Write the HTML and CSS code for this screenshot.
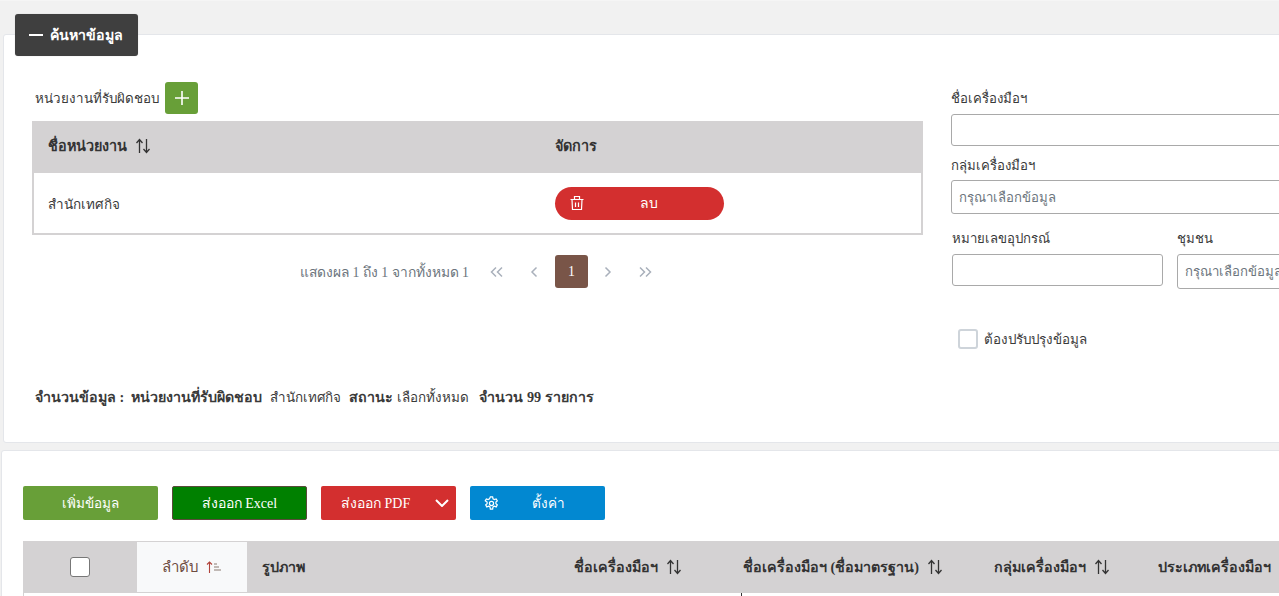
FILE: index.html
```html
<!DOCTYPE html>
<html lang="th">
<head>
<meta charset="utf-8">
<title>ค้นหาข้อมูล</title>
<link rel="stylesheet" href="styles.css">
</head>
<body>
<div class="page">
  <button class="tab"><span class="tab-dash"></span>ค้นหาข้อมูล</button>
  <section class="card search-card">
    <div class="search-grid">
      <div class="left-col">
        <div class="unit-label"><span>หน่วยงานที่รับผิดชอบ</span>
          <button class="add-btn"><svg width="16" height="16" viewBox="0 0 16 16"><path d="M8 1v14M1 8h14" stroke="#fff" stroke-width="1.6" fill="none"/></svg></button>
        </div>
        <table class="unit-table">
          <colgroup><col class="u1"><col></colgroup>
          <thead><tr><th>ชื่อหน่วยงาน <svg class="sort" width="16" height="16" viewBox="0 0 16 16"><path d="M4.500 15V2M1.500 5l3-3.500 3 3.500M11.500 1v13M8.500 11l3 3.500 3-3.500" stroke="#333" stroke-width="1.300" fill="none"/></svg></th><th>จัดการ</th></tr></thead>
          <tbody><tr><td>สำนักเทศกิจ</td><td>
            <button class="del-btn"><svg width="16" height="16" viewBox="0 0 16 16" fill="none" stroke="#fff" stroke-width="1.200"><path d="M1.500 4.500h13M3 4.500l.5 10h9l.5-10M5.500 4.500V1.500h5v3M6.500 7.500v4.500M9.500 7.500v4.500"/></svg><span>ลบ</span></button>
          </td></tr></tbody>
        </table>
        <div class="pager">
          <span class="pager-info">แสดงผล 1 ถึง 1 จากทั้งหมด 1</span>
          <span class="pg"><svg width="14" height="12" viewBox="0 0 14 12" fill="none" stroke="#a9b0bb" stroke-width="1.500"><path d="M6 1.500 1.500 6 6 10.500M12 1.500 7.500 6 12 10.500"/></svg></span>
          <span class="pg"><svg width="8" height="12" viewBox="0 0 8 12" fill="none" stroke="#a9b0bb" stroke-width="1.500"><path d="M6.500 1.500 2 6l4.500 4.500"/></svg></span>
          <span class="pg active">1</span>
          <span class="pg"><svg width="8" height="12" viewBox="0 0 8 12" fill="none" stroke="#a9b0bb" stroke-width="1.500"><path d="M1.500 1.500 6 6l-4.500 4.500"/></svg></span>
          <span class="pg"><svg width="14" height="12" viewBox="0 0 14 12" fill="none" stroke="#a9b0bb" stroke-width="1.500"><path d="M2 1.500 6.500 6 2 10.500M8 1.500 12.500 6 8 10.500"/></svg></span>
        </div>
      </div>
      <div class="right-col">
        <label class="f-label f-first">ชื่อเครื่องมือฯ</label>
        <div class="f-input f-wide"></div>
        <label class="f-label f-second">กลุ่มเครื่องมือฯ</label>
        <div class="f-input f-wide f-select">กรุณาเลือกข้อมูล</div>
        <div class="f-pair">
          <div class="f-num">
            <label class="f-label">หมายเลขอุปกรณ์</label>
            <div class="f-input"></div>
          </div>
          <div class="f-comm">
            <label class="f-label">ชุมชน</label>
            <div class="f-input f-select f-tall">กรุณาเลือกข้อมูล</div>
          </div>
        </div>
        <div class="f-check"><span class="check-box"></span><span class="check-text">ต้องปรับปรุงข้อมูล</span></div>
      </div>
    </div>
    <p class="summary"><b>จำนวนข้อมูล :&nbsp; หน่วยงานที่รับผิดชอบ</b> <span class="sum-reg sum-unit">สำนักเทศกิจ</span>&nbsp; <b class="sum-status">สถานะ</b> <span class="sum-reg">เลือกทั้งหมด</span> &nbsp; <b>จำนวน 99 รายการ</b></p>
  </section>
  <section class="card list-card">
    <div class="actions">
      <button class="act green">เพิ่มข้อมูล</button>
      <button class="act excel">ส่งออก Excel</button>
      <button class="act pdf"><span>ส่งออก PDF</span><svg width="14" height="8" viewBox="0 0 14 8" fill="none" stroke="#fff" stroke-width="2"><path d="M1 1l6 6 6-6"/></svg></button>
      <button class="act setting"><svg width="15" height="15" viewBox="0 0 16 16" fill="none" stroke="#fff" stroke-width="1.300"><path d="M6.800 1h2.400l.4 2 1.500.8 1.900-.7 1.200 2.100-1.500 1.300v1.700l1.500 1.300-1.200 2.100-1.900-.7-1.500.8-.4 2.300H6.800l-.4-2.300-1.500-.8-1.900.7-1.200-2.100 1.500-1.300V6.500L1.300 5.200l1.200-2.100 1.900.7 1.500-.8z"/><circle cx="8" cy="8" r="2.200"/></svg><span>ตั้งค่า</span></button>
    </div>
    <table class="data-table">
      <colgroup><col class="c1"><col class="c2"><col class="c3"><col class="c4"><col class="c5"><col class="c6"><col class="c7"></colgroup>
      <thead>
        <tr>
          <th class="chk"><span class="white-box"></span></th>
          <th class="sorted">ลำดับ <svg class="sort-asc" width="16" height="12" viewBox="0 0 16 12" fill="none" stroke="#b0433a" stroke-width="1.100"><path d="M3.500 12V1M1 3.500 3.500 1 6 3.500" /><path d="M8 3h3M8 6h5M8 9h7" stroke="#8a7a70"/></svg></th>
          <th>รูปภาพ</th>
          <th>ชื่อเครื่องมือฯ <svg class="sort" width="16" height="16" viewBox="0 0 16 16"><path d="M4.500 15V2M1.500 5l3-3.500 3 3.500M11.500 1v13M8.500 11l3 3.500 3-3.500" stroke="#333" stroke-width="1.300" fill="none"/></svg></th>
          <th>ชื่อเครื่องมือฯ (ชื่อมาตรฐาน) <svg class="sort" width="16" height="16" viewBox="0 0 16 16"><path d="M4.500 15V2M1.500 5l3-3.500 3 3.500M11.500 1v13M8.500 11l3 3.500 3-3.500" stroke="#333" stroke-width="1.300" fill="none"/></svg></th>
          <th>กลุ่มเครื่องมือฯ <svg class="sort" width="16" height="16" viewBox="0 0 16 16"><path d="M4.500 15V2M1.500 5l3-3.500 3 3.500M11.500 1v13M8.500 11l3 3.500 3-3.500" stroke="#333" stroke-width="1.300" fill="none"/></svg></th>
          <th>ประเภทเครื่องมือฯ</th>
        </tr>
      </thead>
      <tbody><tr><td></td><td></td><td></td><td></td><td><span class="tick"></span></td><td></td><td></td></tr></tbody>
    </table>
  </section>
</div>
</body>
</html>
```
FILE: styles.css
```css
html, body { margin: 0; padding: 0; }
body {
  width: 1279px;
  height: 596px;
  overflow: hidden;
  background: #f1f1f1;
  font-family: "Liberation Serif", "Noto Sans", sans-serif;
  font-size: 13.2px;
  color: #3a3a3a;
}
button { font-family: inherit; font-size: 14px; border: 0; padding: 0; cursor: pointer; }
.page { width: 1500px; border-top: 1px solid #f5f5f5; }
.card { background: #fff; border: 1px solid #e4e6ea; border-radius: 3px; }
.tab {
  position: relative;
  z-index: 1;
  display: flex;
  align-items: center;
  width: 123px;
  height: 42px;
  margin: 13px 0 -22px 15px;
  padding-left: 14px;
  background: #3f3f3f;
  color: #fff;
  font-size: 14.2px;
  font-weight: 700;
  border-radius: 3px;
  box-shadow: 0 0 1px #bbb;
}
.tab-dash { width: 14px; height: 2px; background: #fff; margin-right: 7px; }
.search-card { margin-left: 3px; height: 407px; padding: 0; position: relative; }
.search-grid { display: flex; align-items: flex-start; padding-top: 47px; padding-left: 28px; }
.left-col { width: 891px; flex: none; }
.unit-label { display: flex; align-items: center; height: 32px; padding-left: 3px; gap: 6px; margin-bottom: 7px; font-size: 13.4px; }
.add-btn { width: 33px; height: 32px; background: #689f38; border-radius: 3px; display: flex; align-items: center; justify-content: center; }
.unit-table { width: 891px; border-collapse: separate; border-spacing: 0; table-layout: fixed; }
.u1 { width: 507px; }
.unit-table th { height: 52px; padding: 0 16px 3px; box-sizing: border-box; background: #d4d2d3; text-align: left; color: #333; font-size: 14.4px; font-weight: 700; }
.unit-table td { height: 62px; padding: 1px 16px 0; box-sizing: border-box; border-bottom: 2px solid #d4d2d3; font-size: 13.5px; }
.unit-table tbody tr td:first-child { border-left: 2px solid #d4d2d3; padding-left: 14px; }
.unit-table tbody tr td:last-child { border-right: 2px solid #d4d2d3; padding-top: 0; }
.sort { vertical-align: -3px; margin-left: 4px; }
.del-btn { display: flex; align-items: center; width: 169px; height: 33px; border-radius: 17px; background: #d32f2f; color: #fff; padding-left: 14px; }
.del-btn span { flex: 1; text-align: center; padding-right: 11px; }
.pager { display: flex; align-items: center; margin-top: 20px; padding-left: 268px; height: 33px; color: #6c757d; font-size: 13.8px; }
.pager-info { margin-right: 10px; }
.pg { width: 37px; height: 33px; display: flex; align-items: center; justify-content: center; }
.pg.active { width: 33px; margin: 0 2px; background: #795548; color: #fff; border-radius: 3px; }
.right-col { width: 600px; flex: none; padding-left: 28px; }
.f-label { display: block; color: #3a3a3a; line-height: 20px; }
.f-first { margin-top: 7px; }
.f-second { margin-top: 10px; margin-bottom: 4px; }
.f-input { height: 32px; box-sizing: border-box; border: 1px solid #a9a9a9; border-radius: 3px; background: #fff; }
.f-first + .f-input { margin-top: 5px; }
.f-select { height: 34px; padding-left: 7px; line-height: 33px; color: #6c757d; }
.f-pair { display: flex; margin-top: 14px; margin-left: 1px; gap: 14px; }
.f-num { width: 211px; flex: none; }
.f-comm { width: 300px; flex: none; }
.f-num .f-label, .f-comm .f-label { margin-top: 1px; margin-bottom: 5px; }
.f-tall { height: 35px; }
.f-check { display: flex; align-items: center; gap: 6px; margin-top: 39px; margin-left: 7px; }
.check-box { border: 2px solid #ced4da; width: 16px; height: 16px; border-radius: 3px; background: #fff; }
.check-text { font-size: 13.4px; padding-top: 1px; }
.summary { margin: 0; position: absolute; left: 31px; top: 351px; color: #3a3a3a; font-size: 14.25px; white-space: nowrap; }
.sum-reg { font-size: 13.4px; }
.sum-unit { margin-left: 4px; }
.sum-status { margin-left: 1px; }
.list-card { margin: 7px 0 0 1px; height: 200px; padding: 35px 0 0 21px; box-sizing: border-box; }
.actions { display: flex; gap: 14px; }
.act { width: 135px; height: 34px; border-radius: 2px; color: #fff; display: flex; align-items: center; justify-content: center; }
.green { background: #689f38; font-size: 13.5px; }
.excel { background: #008000; border: 1px solid #5a4a3a; box-sizing: border-box; }
.pdf { background: #d32f2f; justify-content: space-between; padding: 0 7px 0 20px; box-sizing: border-box; }
.setting { background: #0288d1; justify-content: flex-start; padding-left: 14px; box-sizing: border-box; font-size: 13.5px; }
.setting span { flex: 1; text-align: center; padding-right: 8px; }
.data-table { width: 1400px; margin-top: 21px; border-collapse: separate; border-spacing: 0; table-layout: fixed; }
.c1 { width: 114px; }
.c2 { width: 110px; }
.c3 { width: 312px; }
.c4 { width: 169px; }
.c5 { width: 251px; }
.c6 { width: 164px; }
.data-table th { height: 52px; padding: 0 15px 1px; box-sizing: border-box; background: #d4d2d3; text-align: left; color: #333; font-size: 14.3px; font-weight: 700; white-space: nowrap; }
.data-table .chk { text-align: center; padding: 0; }
.white-box { display: inline-block; width: 18px; height: 18px; background: #fff; border: 1px solid #777; border-radius: 3px; vertical-align: middle; }
.data-table .sorted { background: #f8f9fa; color: #6d4c41; font-size: 15px; font-weight: 400; text-align: center; box-shadow: inset 0 1px 0 #d4d2d3, inset 0 -1px 0 #d4d2d3; }
.sort-asc { margin-left: 3px; vertical-align: -1px; }
.data-table td { height: 20px; padding: 0; }
.data-table td:first-child { border-left: 1px solid #d4d2d3; }
.tick { display: block; width: 1px; height: 20px; margin-left: 13px; background: #333; }
```
